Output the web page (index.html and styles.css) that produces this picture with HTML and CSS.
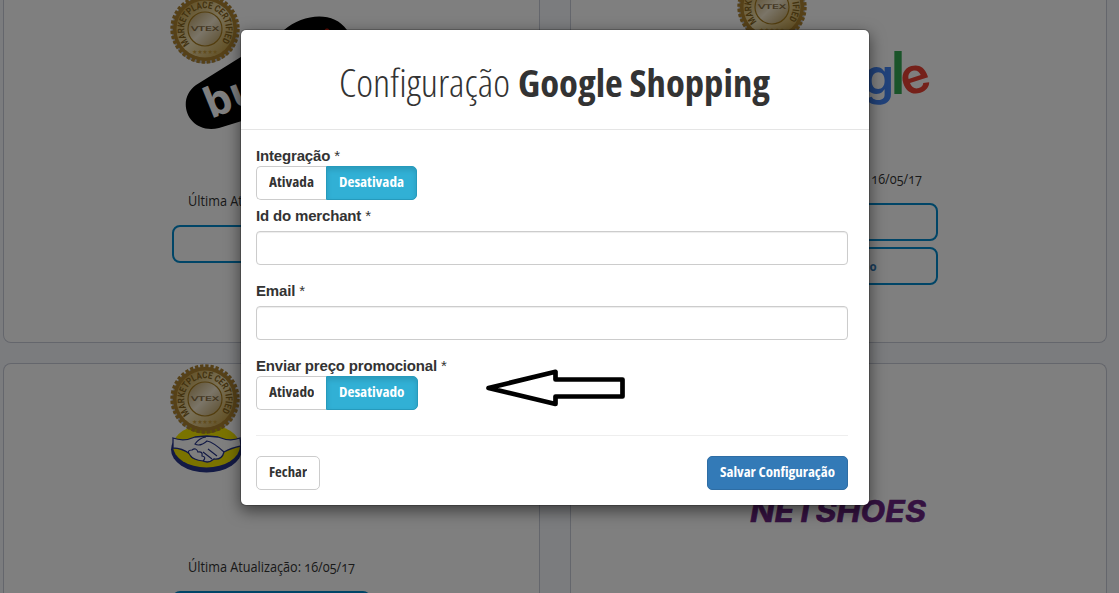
FILE: index.html
```html
<!DOCTYPE html>
<html lang="pt-BR">
<head>
<meta charset="utf-8">
<title>Configuração Google Shopping</title>
<link rel="stylesheet" href="styles.css">
</head>
<body>
<svg class="defs" width="0" height="0">
  <defs>
    <linearGradient id="gold" x1="0" y1="0" x2="1" y2="1">
      <stop offset="0" stop-color="#b98e2c"/><stop offset=".5" stop-color="#f3e3b4"/><stop offset="1" stop-color="#b98e2c"/>
    </linearGradient>
    <linearGradient id="goldCore" x1="0" y1="0" x2="1" y2="1">
      <stop offset="0" stop-color="#b99c5c"/><stop offset=".5" stop-color="#f6ead0"/><stop offset="1" stop-color="#b79a58"/>
    </linearGradient>
    <path id="arc" d="M-15 14.500 A20.800 20.800 0 1 1 15 14.500"/>
    <symbol id="seal" viewBox="-36 -36 72 72" overflow="visible">
      <circle cy="1" r="33.5" fill="#000" opacity=".25"/>
      <circle r="32" fill="#ac8230"/>
      <circle r="33" fill="none" stroke="#ac8230" stroke-width="3.4" stroke-dasharray="3.3 1.884"/>
      <circle r="28.5" fill="url(#gold)"/>
      <circle r="17" fill="url(#goldCore)" stroke="#a67b1d" stroke-width="1.2"/>
      <text class="seal-ring"><textPath href="#arc" textLength="94" lengthAdjust="spacingAndGlyphs">MARKETPLACE CERTIFIED</textPath></text>
      <text class="seal-name" x="-14" y="2.3" textLength="28" lengthAdjust="spacingAndGlyphs">VTEX</text>
      <text class="seal-stars" x="-13" y="25" textLength="26">★★★★★</text>
    </symbol>
  </defs>
</svg>

<main class="grid">
  <section class="card">
    <svg class="art art-tall" width="198" height="191">
      <path fill="#000" d="M23 85 L111 30 C130 14 160 10 174 30 L176 65 L72 120 L46 128 C15 135 2 100 23 85Z"/>
      <circle cx="154" cy="31" r="2.5" fill="#e3210c"/>
      <text class="logo-bu" transform="translate(38 119) rotate(-22)">bus</text>
      <use href="#seal" x="-4" y="-7" width="72" height="72"/>
    </svg>
    <p class="updated"><svg width="168" height="20"><text x="0" y="15" textLength="167" lengthAdjust="spacingAndGlyphs">Última Atualização: 16/05/17</text></svg></p>
    <div class="actions"><a class="action"></a></div>
  </section>

  <section class="card">
    <svg class="art art-short" width="198" height="169">
      <g class="logo-google">
        <text x="123" y="94" fill="#4285f4">g</text>
        <text transform="translate(150.500 94) scale(1.150 1.180)" fill="#34a853">l</text>
        <text transform="translate(165.500 97) rotate(-18)" fill="#ea4335">e</text>
      </g>
      <use href="#seal" x="-4" y="-29" width="72" height="72"/>
    </svg>
    <p class="updated"><svg width="168" height="20"><text x="0" y="15" textLength="167" lengthAdjust="spacingAndGlyphs">Última Atualização: 16/05/17</text></svg></p>
    <div class="actions"><a class="action"></a><a class="action">Configuração</a></div>
  </section>

  <section class="card">
    <svg class="art art-row" width="198" height="193">
      <ellipse cx="33.500" cy="85.500" rx="35.500" ry="23" fill="#26348b"/>
      <ellipse cx="33.500" cy="82" rx="33.500" ry="21.500" fill="#f5e600"/>
      <path d="M0 74 Q11 78 22 73 L34 72 L45 73 Q57 78 67 74 L68 82 Q58 84 51 88 Q49 96 41 95 Q34 101 28 95 Q18 95 17 90 Q9 84 0 84Z" fill="#fff" stroke="#26348b" stroke-width="1.300"/>
      <path d="M33 73 Q26 74 22 80 Q27 83 34 77 Q40 78 51 88 M35 85 L44 92 M30 88 L39 95" fill="none" stroke="#26348b" stroke-width="1.200"/>
      <path d="M17 91 Q13 86 19 86 Q23 83 25 88 Q30 87 29 92 Q34 93 30 97 Q20 96 17 91Z" fill="#fff" stroke="#26348b" stroke-width="1.200"/>
      <use href="#seal" x="-4" y="-1" width="72" height="72"/>
    </svg>
    <p class="updated"><svg width="168" height="20"><text x="0" y="15" textLength="167" lengthAdjust="spacingAndGlyphs">Última Atualização: 16/05/17</text></svg></p>
    <div class="actions"><a class="action"></a></div>
  </section>

  <section class="card">
    <svg class="art art-row" width="198" height="193">
      <text class="logo-netshoes" x="10" y="158" textLength="176" lengthAdjust="spacingAndGlyphs">NETSHOES</text>
    </svg>
  </section>
</main>

<div class="backdrop">
  <div class="modal">
    <header class="modal-head">
      <svg class="title" width="434" height="50">
        <text class="light" x="1" y="37" textLength="171" lengthAdjust="spacingAndGlyphs">Configuração</text>
        <text class="strong" x="180" y="37" textLength="252" lengthAdjust="spacingAndGlyphs">Google Shopping</text>
      </svg>
    </header>
    <div class="modal-body">
      <div class="label">Integração <span>*</span></div>
      <div class="toggle">
        <button class="btn first"><svg width="46" height="20"><text y="14" textLength="45" lengthAdjust="spacingAndGlyphs">Ativada</text></svg></button>
        <button class="btn active"><svg width="65" height="20"><text y="14" textLength="65" lengthAdjust="spacingAndGlyphs">Desativada</text></svg></button>
      </div>
      <div class="label next">Id do merchant <span>*</span></div>
      <input class="field" type="text">
      <div class="label">Email <span>*</span></div>
      <input class="field" type="text">
      <div class="label">Enviar preço promocional <span>*</span></div>
      <div class="toggle">
        <button class="btn first"><svg width="46" height="20"><text y="14" textLength="45.500" lengthAdjust="spacingAndGlyphs">Ativado</text></svg></button>
        <button class="btn active"><svg width="66" height="20"><text y="14" textLength="65.500" lengthAdjust="spacingAndGlyphs">Desativado</text></svg></button>
      </div>
      <footer class="modal-foot">
        <button class="btn"><svg width="38" height="20"><text y="14" textLength="38" lengthAdjust="spacingAndGlyphs">Fechar</text></svg></button>
        <button class="btn primary"><svg width="115" height="20"><text y="14" textLength="115" lengthAdjust="spacingAndGlyphs">Salvar Configuração</text></svg></button>
      </footer>
    </div>
    <svg class="pointer" width="142" height="40" viewBox="485 368 142 40">
      <path d="M488.500 388 L555.500 371.800 V379.500 H622.500 V396.500 H555.500 V404 Z" fill="#fff" stroke="#000" stroke-width="4.700" stroke-linejoin="round"/>
    </svg>
  </div>
</div>
</body>
</html>
```
FILE: styles.css
```css
* { box-sizing: border-box; }
body { margin: 0; height: 593px; overflow: hidden; background: #f7f9fd; font-family: "Liberation Sans", Arial, sans-serif; color: #333; }
svg { display: block; }
.defs { position: absolute; }

.grid { display: grid; grid-template-columns: 537px 537px; grid-template-rows: 343px 230px; gap: 20px 30px; height: 593px; overflow: hidden; padding-left: 3px; }
.card { display: flex; flex-direction: column; align-items: center; background: #fff; border: 1px solid #c8ccd8; border-radius: 8px; }
.card:nth-child(-n+2) { border-top: 0; border-radius: 0 0 8px 8px; }
.card:nth-child(n+3) { border-bottom: 0; border-radius: 8px 8px 0 0; overflow: hidden; }
.art { overflow: visible; flex: none; }
.updated { margin: 0 0 14px; font: 14px "Open Sans", sans-serif; font-variant-numeric: oldstyle-nums; }
.updated svg { overflow: visible; }
.updated text { fill: #333; }
.actions { display: flex; flex-direction: column; gap: 6px; }
.action { display: flex; align-items: center; justify-content: center; width: 199px; height: 38px; border: 2px solid #008bce; border-radius: 8px; color: #337ab7; font: bold 11.5px "Open Sans", sans-serif; }

.seal-ring { font: bold 9.5px "Roboto", sans-serif; fill: #85641c; }
.seal-name { font: 6.5px "DejaVu Sans", sans-serif; fill: #7c6336; stroke: #7c6336; stroke-width: .2px; }
.seal-stars { font: 6px "DejaVu Sans", sans-serif; fill: #c39a3c; }
.logo-bu { font: bold 42px "Open Sans", sans-serif; fill: #fff; }
.logo-google { font: 600 50px "Inter", sans-serif; }
.logo-netshoes { font: italic bold 30px "Inter", sans-serif; fill: #6b2482; stroke: #6b2482; stroke-width: .6px; }

.backdrop { position: absolute; inset: 0; padding: 29px 0 0 240px; background: rgba(0,0,0,.5); }
.modal { position: relative; width: 630px; height: 477px; background: #fff; background-clip: padding-box; border: 1px solid rgba(0,0,0,.2); border-radius: 6px; box-shadow: 0 5px 15px rgba(0,0,0,.5); }
.modal-head { display: flex; justify-content: center; height: 100px; padding-top: 30px; border-bottom: 1px solid #e5e5e5; }
.title { font: 38px "Open Sans", sans-serif; font-stretch: 75%; }
.title text, .btn text { fill: #333; }
.title .light { font-weight: 300; }
.title .strong { font-weight: 700; }
.modal-body { padding: 15px 21px 0 15px; }
.label { height: 21px; font-size: 15px; line-height: 21px; font-weight: bold; letter-spacing: -.17px; }
.label span { font-weight: normal; }
.next { margin-top: 5px; }
.toggle { display: flex; }
.btn { display: flex; align-items: center; height: 34px; padding: 0 12px; background: #fff; border: 1px solid #ccc; border-radius: 5px; font: bold 14px "Open Sans", sans-serif; font-stretch: 75%; }
.first { border-radius: 5px 0 0 5px; border-right: 0; width: 70px; }
.active { border-color: #269abc; border-radius: 0 5px 5px 0; background: #31b0d5; box-shadow: inset 0 3px 5px rgba(0,0,0,.125); }
.btn.active text, .btn.primary text { fill: #fff; }
.field { display: block; width: 592px; height: 34px; margin: 5px 0 15px; border: 1px solid #ccc; border-radius: 4px; box-shadow: inset 0 1px 1px rgba(0,0,0,.075); }
.modal-foot { display: flex; justify-content: space-between; margin-top: 25px; padding-top: 20px; border-top: 1px solid #eee; }
.primary { background: #337ab7; border-color: #2e6da4; }
.pointer { position: absolute; left: 244px; top: 338px; }
```
